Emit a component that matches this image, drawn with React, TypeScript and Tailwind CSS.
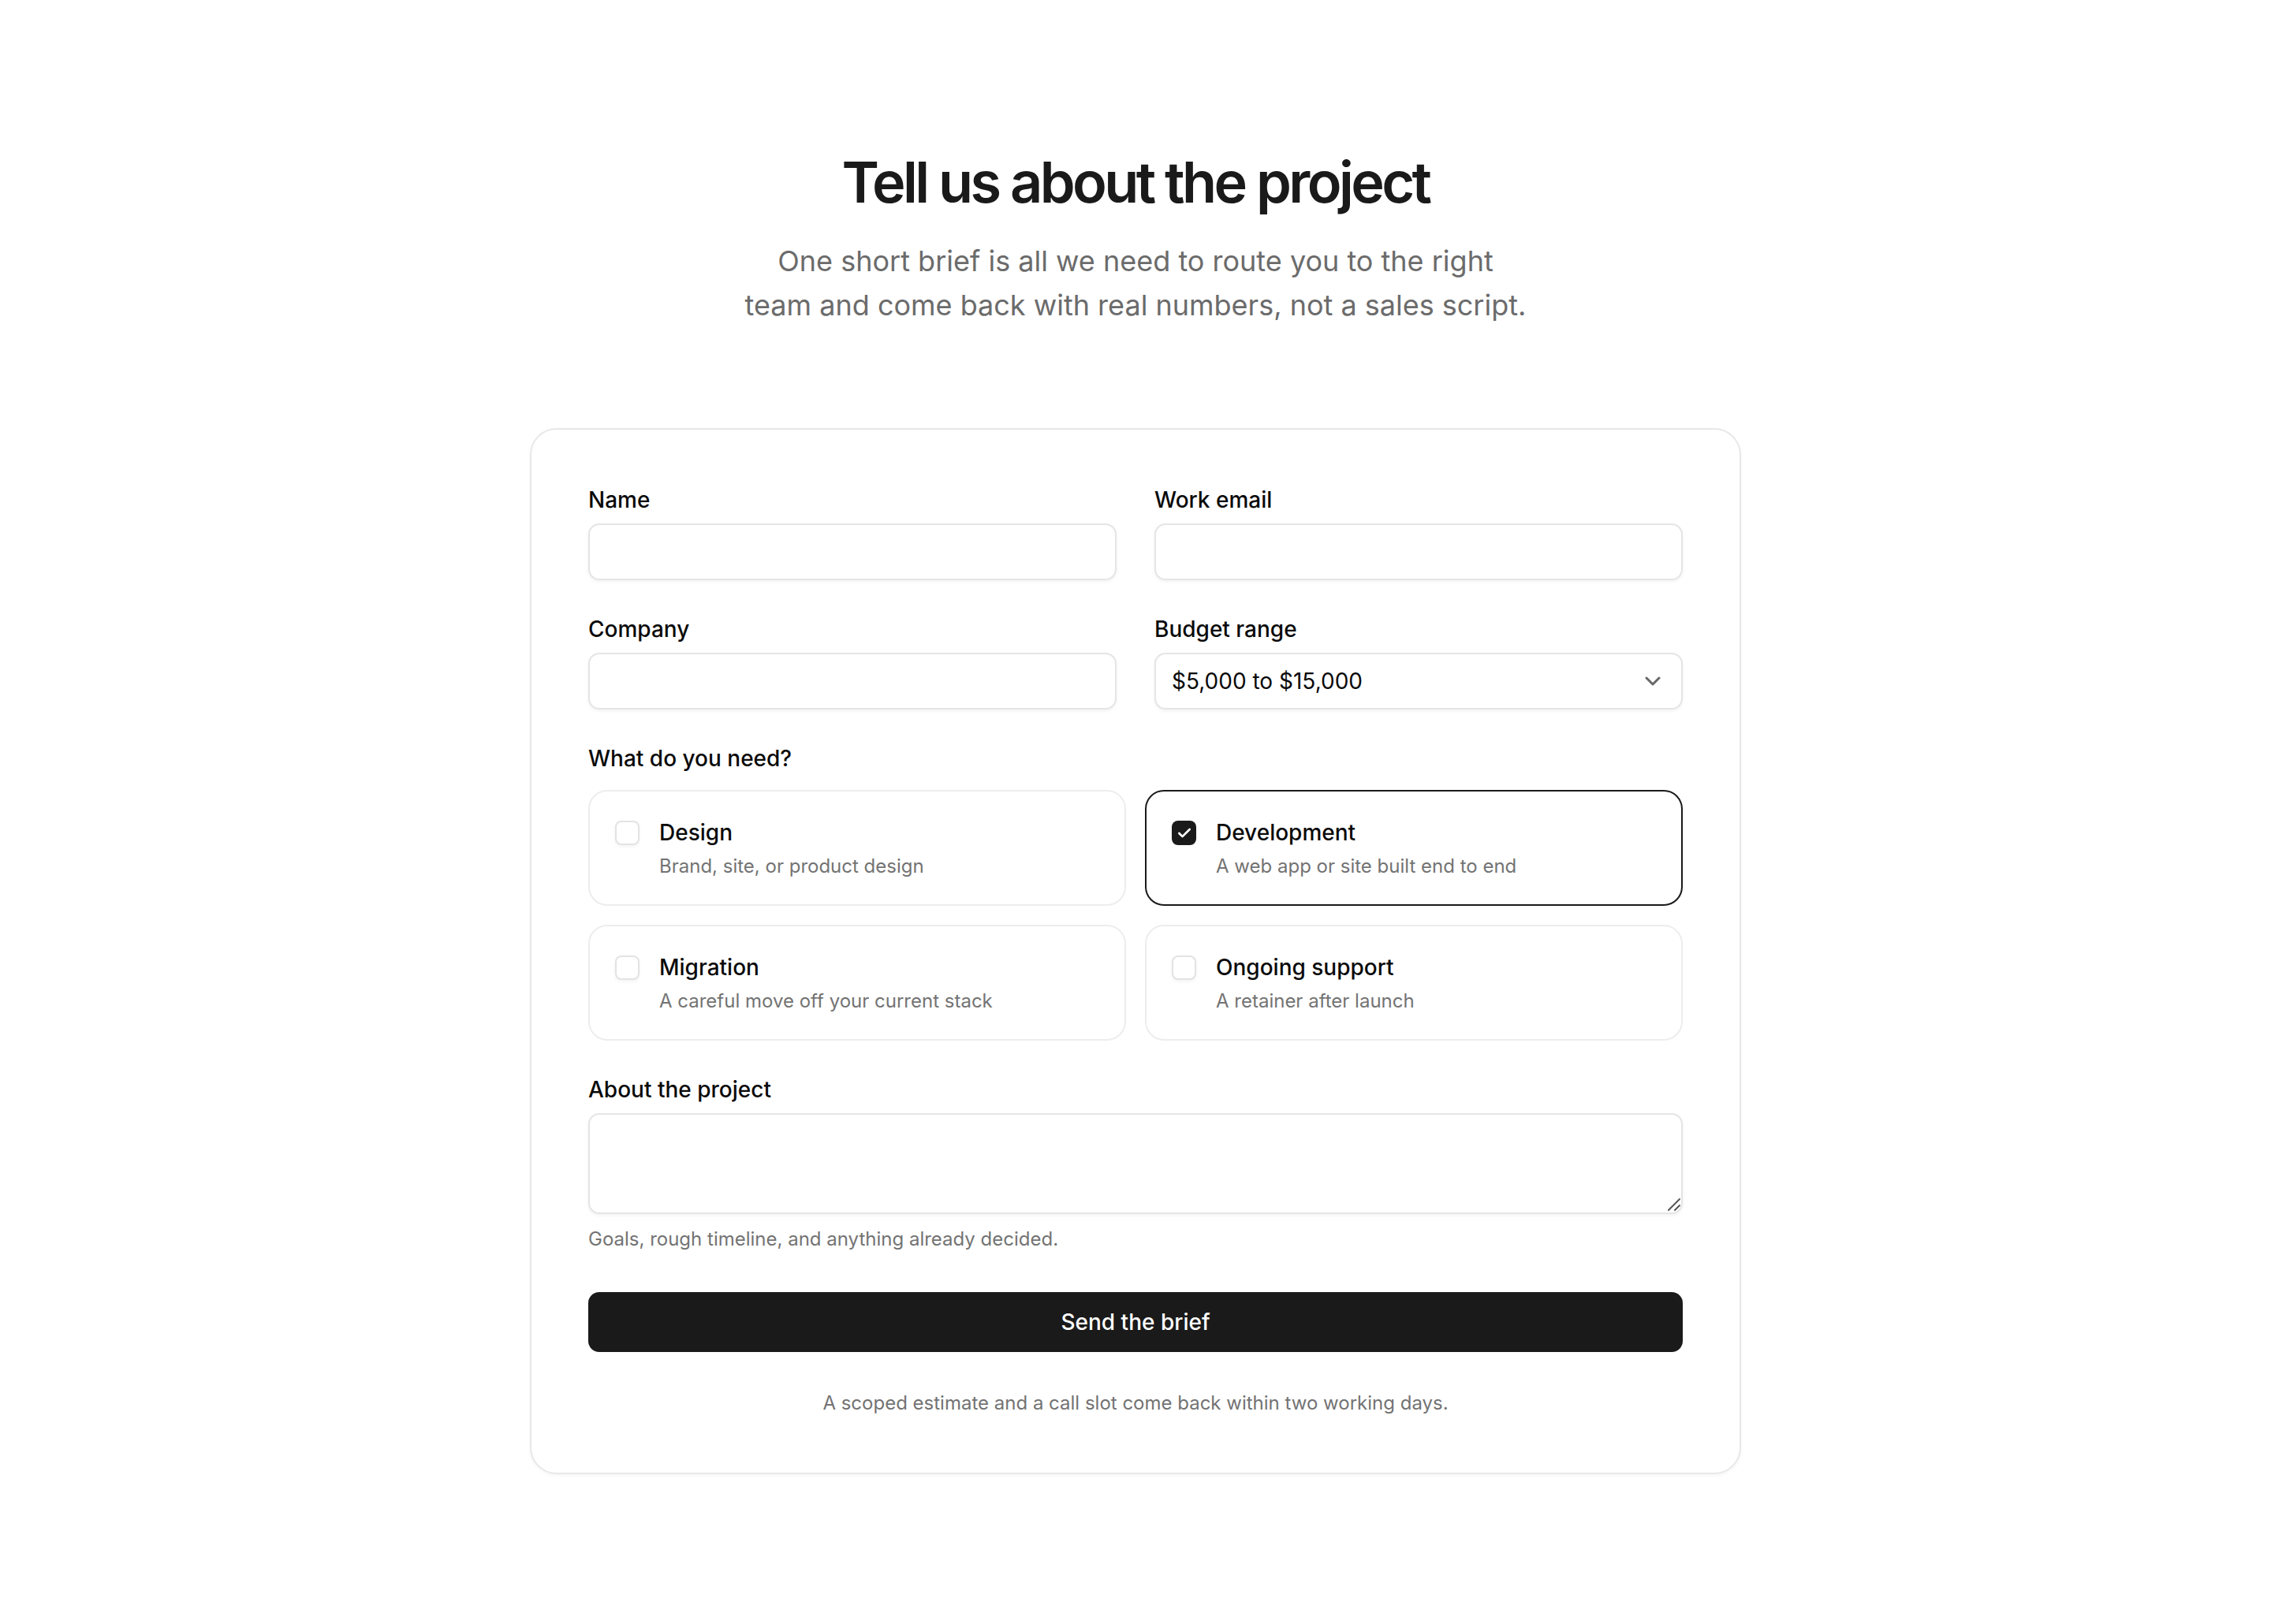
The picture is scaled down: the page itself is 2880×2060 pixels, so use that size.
import React from "react";

const options = [
  { title: "Design", desc: "Brand, site, or product design", checked: false },
  { title: "Development", desc: "A web app or site built end to end", checked: true },
  { title: "Migration", desc: "A careful move off your current stack", checked: false },
  { title: "Ongoing support", desc: "A retainer after launch", checked: false },
];

const inputCls =
  "h-[72px] w-full rounded-[14px] border-2 border-[#e5e5e5] bg-white px-[20px] text-[28px] text-[#0a0a0a] shadow-[0_2px_4px_rgba(0,0,0,0.05)] outline-none";

function Field({ label, children }: { label: string; children: React.ReactNode }) {
  return (
    <div className="flex flex-col gap-4">
      <label className="text-[28px] leading-none font-medium text-[#0a0a0a]">{label}</label>
      {children}
    </div>
  );
}

function Checkbox({ checked }: { checked: boolean }) {
  if (checked) {
    return (
      <span className="mt-[5px] flex h-[31px] w-[31px] shrink-0 items-center justify-center rounded-[8px] bg-[#1a1a1a]">
        <svg width="20" height="20" viewBox="0 0 24 24" fill="none" stroke="white" strokeWidth="3.2" strokeLinecap="round" strokeLinejoin="round">
          <path d="M20 6 9 17l-5-5" />
        </svg>
      </span>
    );
  }
  return (
    <span className="mt-[5px] block h-[31px] w-[31px] shrink-0 rounded-[8px] border-2 border-[#e3e3e3] bg-white shadow-[0_2px_4px_rgba(0,0,0,0.05)]" />
  );
}

function OptionCard({ title, desc, checked }: { title: string; desc: string; checked: boolean }) {
  return (
    <div
      className={`flex gap-[25px] rounded-[24px] border-2 bg-white p-8 ${
        checked ? "border-[#1a1a1a]" : "border-[#ededed]"
      }`}
    >
      <Checkbox checked={checked} />
      <div className="flex flex-col">
        <span className="text-[28px] leading-[40px] font-medium text-[#0a0a0a]">{title}</span>
        <span className="mt-[7px] text-[24px] leading-[32px] text-[#737373]">{desc}</span>
      </div>
    </div>
  );
}

export default function App() {
  return (
    <div
      className="flex min-h-screen flex-col items-center bg-white pt-[191px] pb-[190px]"
      style={{ fontFamily: "Inter, 'Noto Sans', sans-serif" }}
    >
      <h1 className="text-[72px] leading-[80px] font-semibold tracking-[-0.05em] text-[#1a1a1a]">
        Tell us about the project
      </h1>
      <p className="mt-8 max-w-[1024px] text-center text-[36px] leading-[56px] text-balance text-[#6b6b6b]">
        One short brief is all we need to route you to the right team and come back with real numbers, not a sales script.
      </p>

      <form className="mt-[128px] flex w-[1536px] flex-col gap-12 rounded-[34px] border-2 border-[#e8e8e8] bg-white px-[72px] pt-[75px] pb-[72px] shadow-[0_2px_4px_rgba(0,0,0,0.04)]">
        <div className="grid grid-cols-2 gap-12">
          <Field label="Name">
            <input className={inputCls} />
          </Field>
          <Field label="Work email">
            <input className={inputCls} />
          </Field>
          <Field label="Company">
            <input className={inputCls} />
          </Field>
          <Field label="Budget range">
            <div className={`${inputCls} flex items-center justify-between pr-[26px]`}>
              <span>$5,000 to $15,000</span>
              <svg width="20" height="12" viewBox="0 0 20 12" fill="none" stroke="#666666" strokeWidth="3" strokeLinecap="round" strokeLinejoin="round">
                <path d="M2 2l8 8 8-8" />
              </svg>
            </div>
          </Field>
        </div>

        <div className="flex flex-col gap-[26px]">
          <span className="text-[28px] leading-none font-medium text-[#0a0a0a]">What do you need?</span>
          <div className="grid grid-cols-2 gap-6">
            {options.map((o) => (
              <OptionCard key={o.title} {...o} />
            ))}
          </div>
        </div>

        <div className="flex flex-col gap-4">
          <label className="text-[28px] leading-none font-medium text-[#0a0a0a]">About the project</label>
          <div className="relative">
            <textarea className="block h-[128px] w-full resize-none rounded-[14px] border-2 border-[#e5e5e5] bg-white px-[20px] py-[14px] text-[28px] shadow-[0_2px_4px_rgba(0,0,0,0.05)] outline-none" />
            <svg className="absolute right-[2px] bottom-[3px]" width="18" height="18" viewBox="0 0 18 18" fill="none" stroke="#555555" strokeWidth="2" strokeLinecap="round">
              <path d="M2 16 16 2" />
              <path d="M10 16l6-6" />
            </svg>
          </div>
          <span className="text-[24px] leading-[32px] text-[#737373]">Goals, rough timeline, and anything already decided.</span>
        </div>

        <div className="mt-[3px] flex flex-col gap-[49px]">
          <button
            type="button"
            className="h-[76px] w-full rounded-[14px] bg-[#1a1a1a] text-[28px] font-medium text-white"
          >
            Send the brief
          </button>
          <p className="text-center text-[24px] leading-[32px] text-[#737373]">
            A scoped estimate and a call slot come back within two working days.
          </p>
        </div>
      </form>
    </div>
  );
}
